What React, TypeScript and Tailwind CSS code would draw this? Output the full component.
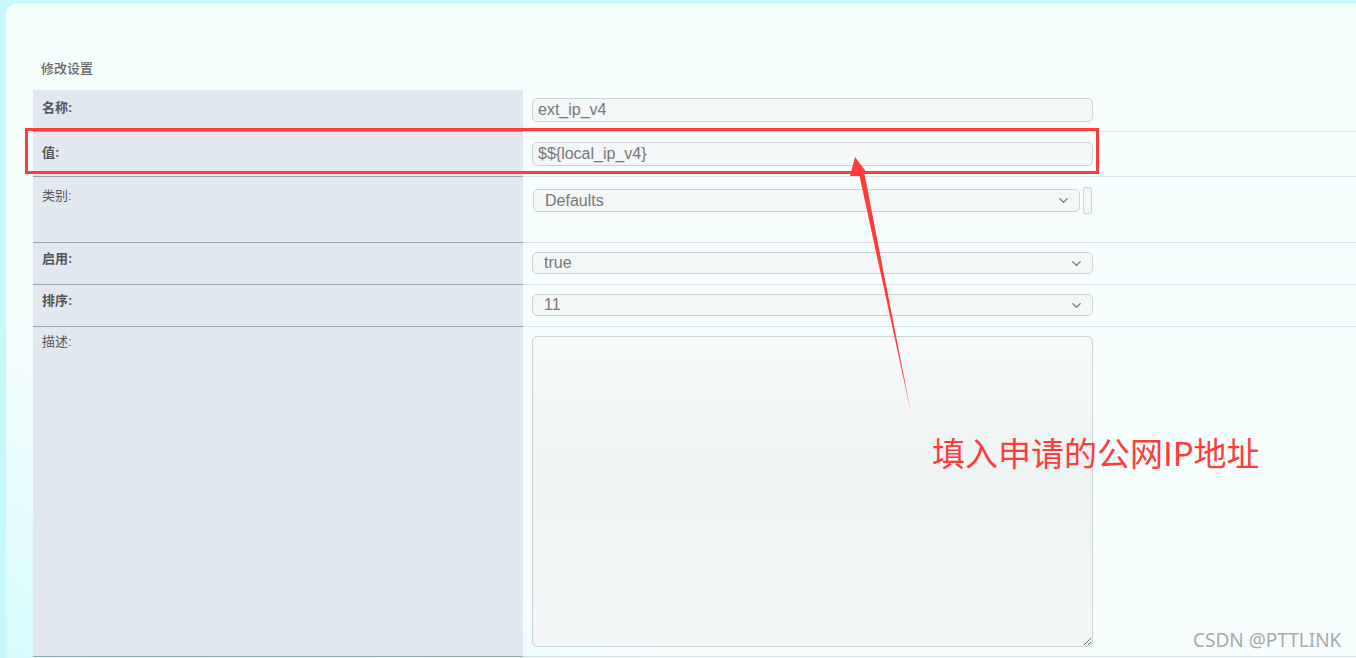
import { ChevronDown } from "lucide-react";

const cjk = "font-['Liberation_Sans','Noto_Sans_CJK_SC',sans-serif]";

const Select = ({ value, className }: { value: string; className: string }) => (
  <div
    className={`flex items-center justify-between rounded-[5px] border border-[#ccd4d6] bg-[#f3f7f7] pl-[11px] pr-[8px] text-[16px] text-[#777] ${className}`}
  >
    <span>{value}</span>
    <ChevronDown size={15} strokeWidth={2.2} className="text-[#777]" />
  </div>
);

const Field = ({ value, className }: { value: string; className: string }) => (
  <input
    readOnly
    value={value}
    className={`w-[561px] rounded-[5px] border border-[#ccd4d6] bg-[#f3f7f7] px-[5px] text-[16px] text-[#777] outline-none ${className}`}
  />
);

const App = () => (
  <div
    className={`relative h-[658px] w-[1356px] overflow-hidden bg-[#c6f8fd] pl-[6px] pt-[3px] ${cjk}`}
  >
    <div className="h-[700px] rounded-tl-[12px] bg-[linear-gradient(to_top_right,#d2fafd_0%,#f7fefe_28%)]">
      <div className="pl-[35px] pt-[57px] pb-[12px] text-[13px] leading-[18px] font-medium text-[#666]">
        修改设置
      </div>
      <div className="ml-[27px] text-[13px] text-[#555]">
        {/* 名称 */}
        <div className="flex h-[42px]">
          <div className="w-[490px] shrink-0 border-b border-[#9aa5a8] bg-[#e2e8f0] pl-[9px] pt-[8px] leading-[20px] font-bold">
            名称:
          </div>
          <div className="flex-1 border-b border-[#d9dfe2] pl-[9px] pt-[8px]">
            <Field value="ext_ip_v4" className="h-[24px]" />
          </div>
        </div>
        {/* 值 */}
        <div className="flex h-[45px]">
          <div className="w-[490px] shrink-0 border-b border-[#9aa5a8] bg-[#e2e8f0] pl-[9px] pt-[11px] leading-[20px] font-bold">
            值:
          </div>
          <div className="flex-1 border-b border-[#d9dfe2] pl-[9px] pt-[10px]">
            <Field value="$${local_ip_v4}" className="h-[24px]" />
          </div>
        </div>
        {/* 类别 */}
        <div className="flex h-[66px]">
          <div className="w-[490px] shrink-0 border-b border-[#9aa5a8] bg-[#e2e8f0] pl-[9px] pt-[9px] leading-[20px]">
            类别:
          </div>
          <div className="flex-1 border-b border-[#d9dfe2] pl-[10px] pt-[10px]">
            <div className="flex h-[27px] items-center">
              <Select value="Defaults" className="h-[23px] w-[547px]" />
              <div className="ml-[3px] h-[27px] w-[9px] rounded-[2px] border border-[#ccd4d6] bg-[#f3f7f7]" />
            </div>
          </div>
        </div>
        {/* 启用 */}
        <div className="flex h-[42px]">
          <div className="w-[490px] shrink-0 border-b border-[#9aa5a8] bg-[#e2e8f0] pl-[9px] pt-[6px] leading-[20px] font-bold">
            启用:
          </div>
          <div className="flex-1 border-b border-[#d9dfe2] pl-[9px] pt-[9px]">
            <Select value="true" className="h-[22px] w-[561px]" />
          </div>
        </div>
        {/* 排序 */}
        <div className="flex h-[42px]">
          <div className="w-[490px] shrink-0 border-b border-[#9aa5a8] bg-[#e2e8f0] pl-[9px] pt-[6px] leading-[20px] font-bold">
            排序:
          </div>
          <div className="flex-1 border-b border-[#d9dfe2] pl-[9px] pt-[9px]">
            <Select value="11" className="h-[22px] w-[561px]" />
          </div>
        </div>
        {/* 描述 */}
        <div className="flex h-[330px]">
          <div className="w-[490px] shrink-0 border-b border-[#9aa5a8] bg-[#e2e8f0] pl-[9px] pt-[5px] leading-[20px]">
            描述:
          </div>
          <div className="flex-1 border-b border-[#d9dfe2] pl-[9px] pt-[9px]">
            <textarea
              readOnly
              className="block h-[311px] w-[561px] resize-both rounded-[5px] border border-[#ccd4d6] bg-[linear-gradient(to_bottom,#f7fafa_0%,#eef3f4_40%,#f2f6f7_100%)] outline-none"
            />
          </div>
        </div>
      </div>
    </div>

    {/* annotation overlay */}
    <div className="absolute left-[25px] top-[128px] h-[46px] w-[1074px] border-[3px] border-[#ff3b3b]" />
    <svg className="pointer-events-none absolute left-0 top-0" width="1356" height="658">
      <polygon
        points="855,157 867,173 864.5,174 911,413 859.5,176 850,176"
        fill="#ff3b3b"
      />
    </svg>
    <div className="absolute left-[932px] top-[429px] text-[33px] leading-[46px] text-[#ff3b3b] font-['Noto_Sans_CJK_SC',sans-serif]">
      填入申请的公网IP地址
    </div>
    <div className="absolute left-[1193px] top-[627px] text-[19px] leading-[26px] text-[#a9a9a9] font-['Noto_Sans','Open_Sans',sans-serif]">
      CSDN @PTTLINK
    </div>
  </div>
);

export default App;
